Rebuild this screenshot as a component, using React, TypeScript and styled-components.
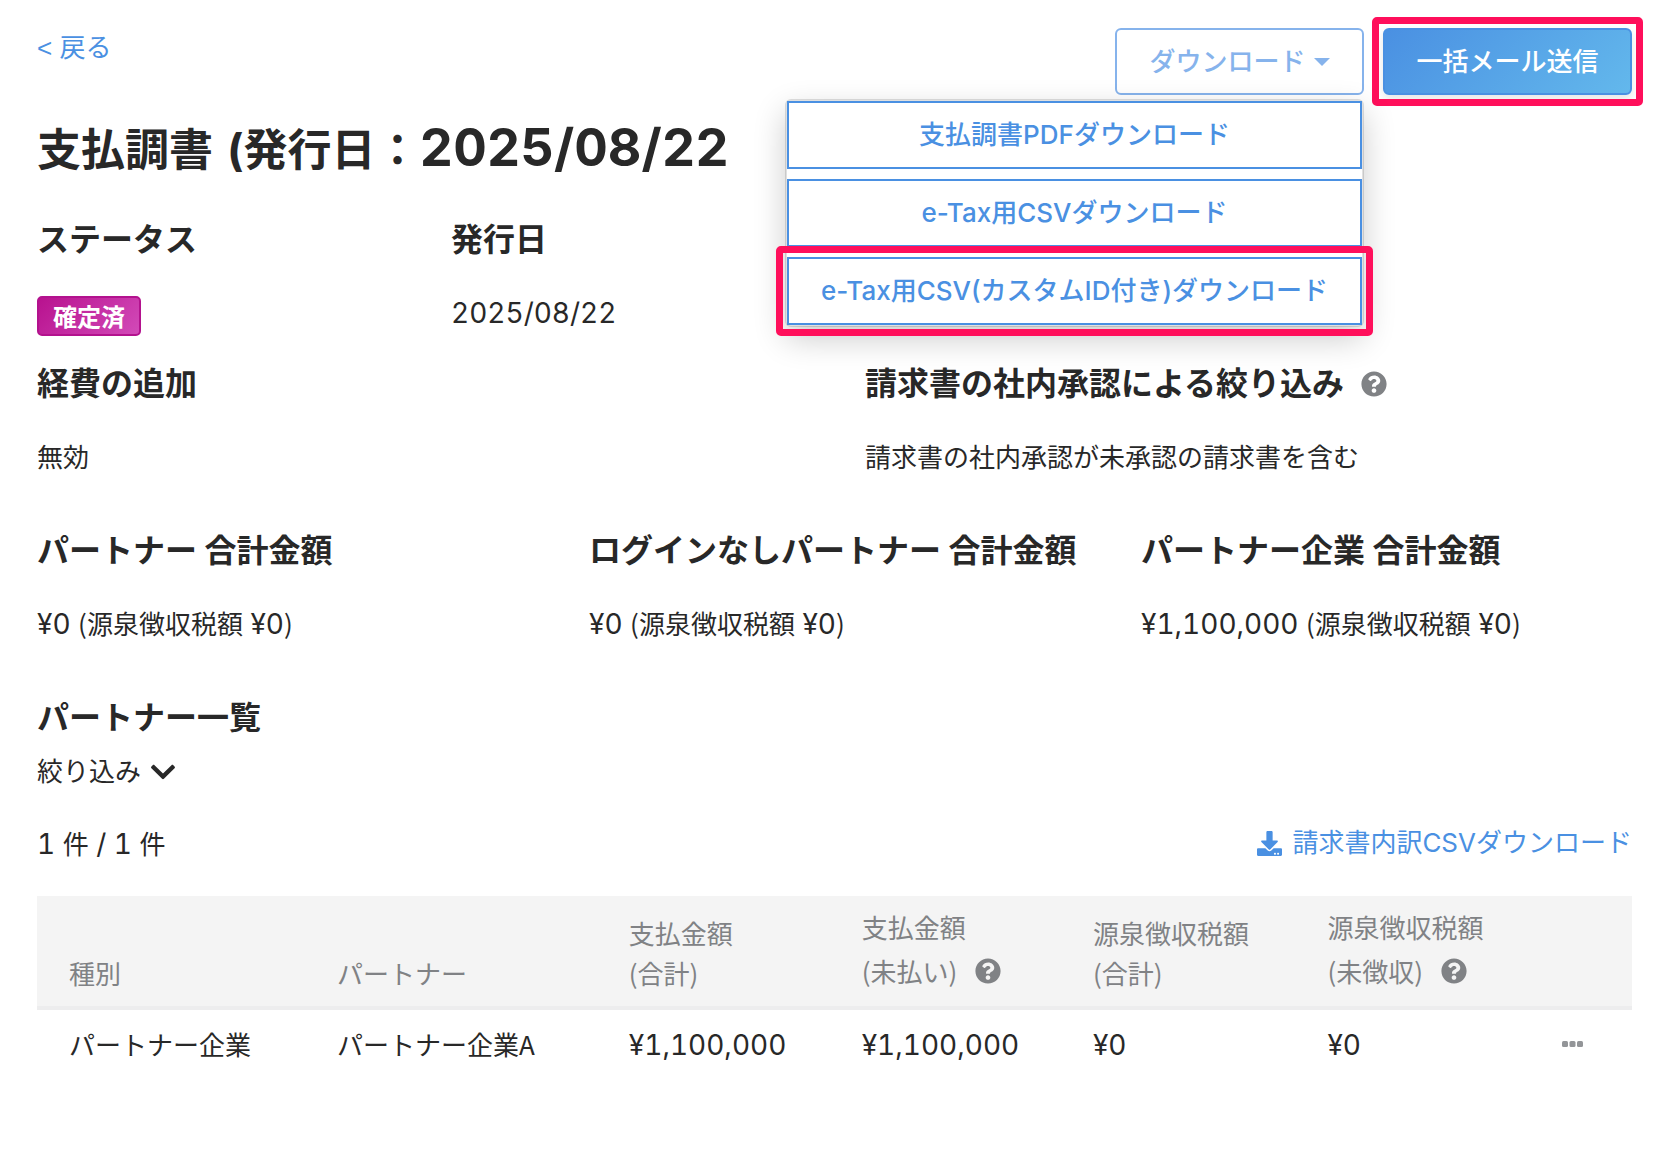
import React from 'react';
import styled, { createGlobalStyle } from 'styled-components';
import { FaChevronDown, FaDownload, FaQuestionCircle } from 'react-icons/fa';

const blue = '#4a90e2';
const ink = '#282828';
const gray = '#808285';
const pink = '#ff0f5b';

const GlobalStyle = createGlobalStyle`
  *, *::before, *::after { box-sizing: border-box; }
  body {
    margin: 0;
    background: #fff;
    color: ${ink};
    font-family: Inter, 'Noto Sans CJK JP', sans-serif;
    font-size: 26px;
    line-height: 40px;
  }
  button { font: inherit; cursor: pointer; }
`;

const Page = styled.main`
  padding: 28px 44px 60px 37px;
`;

const TopBar = styled.header`
  display: flex;
  justify-content: space-between;
  align-items: flex-start;
`;

const BackLink = styled.a`
  color: ${blue};
  font-family: 'Liberation Sans', 'Noto Sans CJK JP', sans-serif;
  text-decoration: none;
`;

const Actions = styled.div`
  display: flex;
  gap: 19px;
`;

const Dropdown = styled.div`
  position: relative;
`;

const Button = styled.button`
  position: relative;
  display: flex;
  align-items: center;
  justify-content: center;
  width: 249px;
  height: 67px;
  padding: 0;
  border: 2px solid ${blue};
  border-radius: 6px;
  font-weight: 500;
`;

const ToggleButton = styled(Button)`
  gap: 8px;
  border-color: #86b3ec;
  background: #fff;
  color: #86b3ec;
`;

const PrimaryButton = styled(Button)`
  background: linear-gradient(135deg, ${blue}, #63b8ec);
  color: #fff;
  box-shadow: 0 4px 8px rgba(0, 0, 0, 0.1);
`;

const Frame = styled.span`
  position: absolute;
  inset: -13px;
  border: 7px solid ${pink};
  border-radius: 5px;
  pointer-events: none;
`;

const Menu = styled.ul`
  position: absolute;
  z-index: 1;
  top: calc(100% + 4px);
  right: 0;
  display: grid;
  gap: 10px;
  width: 579px;
  margin: 0;
  padding: 0;
  list-style: none;
  border: 2px solid rgba(0, 0, 0, 0.12);
  border-radius: 6px;
  background: #fff;
  background-clip: padding-box;
  box-shadow: 0 12px 32px rgba(0, 0, 0, 0.2);
`;

const MenuButton = styled(Button)`
  width: 100%;
  height: 68px;
  border-radius: 0;
  background: #fff;
  color: ${blue};
`;

const Title = styled.h1`
  margin: 21px 0 0;
  font-size: 44px;
  line-height: 68px;
  font-weight: 700;
`;

const Figure = styled.span<{ $large?: boolean }>`
  font-family: Inter, sans-serif;
  font-size: ${(p) => (p.$large ? 52 : 28)}px;
  line-height: 1;
  font-variant-numeric: tabular-nums;
`;

const Grid = styled.dl<{ $columns: number; $top: number }>`
  display: grid;
  grid-template-columns: repeat(${(p) => p.$columns}, minmax(0, 1fr));
  column-gap: 61px;
  row-gap: 24px;
  margin: ${(p) => p.$top}px 0 0;
`;

const Item = styled.div<{ $span?: number }>`
  grid-column: span ${(p) => p.$span ?? 1};
  white-space: nowrap;
`;

const Term = styled.dt`
  display: flex;
  align-items: center;
  gap: 17px;
  height: 48px;
  font-size: 32px;
  font-weight: 700;
`;

const Value = styled.dd`
  height: 48px;
  margin: 24px 0 0;
  font-family: 'Noto Sans CJK JP', sans-serif;
  line-height: 48px;
`;

const Badge = styled.span`
  display: inline-block;
  vertical-align: bottom;
  padding: 0 14px;
  border: 2px solid #b3128e;
  border-radius: 5px;
  background: linear-gradient(135deg, #b8128f, #d24ab8);
  color: #fff;
  font-size: 24px;
  line-height: 36px;
  font-weight: 700;
`;

const HelpIcon = styled(FaQuestionCircle)`
  width: 26px;
  height: 26px;
  color: ${gray};
`;

const ListTitle = styled.h2`
  margin: 47px 0 0;
  font-size: 32px;
  line-height: 48px;
  font-weight: 700;
`;

const FilterButton = styled.button`
  display: flex;
  align-items: center;
  gap: 8px;
  margin: 10px 0 0;
  padding: 0;
  border: 0;
  background: none;
  color: ${ink};
`;

const ListBar = styled.div`
  display: flex;
  justify-content: space-between;
  align-items: center;
  margin: 31px 0 33px;
`;

const Count = styled.span`
  font-family: 'Noto Sans CJK JP', sans-serif;
`;

const DownloadLink = styled.a`
  display: flex;
  align-items: center;
  gap: 10px;
  color: ${blue};
  text-decoration: none;
`;

const Table = styled.table`
  width: 100%;
  table-layout: fixed;
  border-collapse: collapse;
  font-family: 'Noto Sans CJK JP', sans-serif;
  white-space: nowrap;
`;

const HeadCell = styled.th<{ $width: number }>`
  width: ${(p) => p.$width}%;
  padding: 9px 0 13px 32px;
  border-bottom: 4px solid #ededee;
  background: #f4f4f4;
  color: ${gray};
  font-weight: 400;
  text-align: left;
  vertical-align: bottom;
`;

const HeadLine = styled.span<{ $tall?: boolean }>`
  display: flex;
  align-items: center;
  gap: 18px;
  height: ${(p) => (p.$tall ? 44 : 40)}px;
`;

const Cell = styled.td`
  height: 70px;
  padding: 0 0 0 32px;
`;

const MoreButton = styled.button`
  display: flex;
  padding: 0;
  border: 0;
  background: none;
  color: #939598;
`;

const Caret = () => (
  <svg width="16" height="8" viewBox="0 0 16 8" fill="currentColor" aria-hidden="true">
    <path d="M0 0h16L8 8z" />
  </svg>
);

const Dots = () => (
  <svg width="21" height="6" viewBox="0 0 21 6" fill="currentColor" aria-hidden="true">
    <rect width="6" height="6" rx="1.5" />
    <rect x="7.5" width="6" height="6" rx="1.5" />
    <rect x="15" width="6" height="6" rx="1.5" />
  </svg>
);

const columns = [
  { lines: ['種別'], width: 16.8 },
  { lines: ['パートナー'], width: 18.3 },
  { lines: ['支払金額', '(合計)'], width: 14.6 },
  { lines: ['支払金額', '(未払い)'], width: 14.5, help: true },
  { lines: ['源泉徴収税額', '(合計)'], width: 14.7 },
  { lines: ['源泉徴収税額', '(未徴収)'], width: 14.7, help: true },
  { lines: [], width: 6.4 },
];

const totals = [
  { term: 'パートナー 合計金額', amount: '¥0' },
  { term: 'ログインなしパートナー 合計金額', amount: '¥0' },
  { term: 'パートナー企業 合計金額', amount: '¥1,100,000' },
];

export default function App() {
  return (
    <Page>
      <GlobalStyle />
      <TopBar>
        <BackLink href="#">&lt; 戻る</BackLink>
        <Actions>
          <Dropdown>
            <ToggleButton type="button" aria-haspopup="true" aria-expanded="true">
              ダウンロード
              <Caret />
            </ToggleButton>
            <Menu>
              <li><MenuButton type="button">支払調書PDFダウンロード</MenuButton></li>
              <li><MenuButton type="button">e-Tax用CSVダウンロード</MenuButton></li>
              <li>
                <MenuButton type="button">
                  e-Tax用CSV(カスタムID付き)ダウンロード
                  <Frame />
                </MenuButton>
              </li>
            </Menu>
          </Dropdown>
          <PrimaryButton type="button">
            一括メール送信
            <Frame />
          </PrimaryButton>
        </Actions>
      </TopBar>

      <Title>支払調書<Figure $large> </Figure>(発行日：<Figure $large>2025/08/22</Figure></Title>

      <Grid $columns={4} $top={32}>
        <Item>
          <Term>ステータス</Term>
          <Value><Badge>確定済</Badge></Value>
        </Item>
        <Item $span={3}>
          <Term>発行日</Term>
          <Value><Figure>2025/08/22</Figure></Value>
        </Item>
        <Item $span={2}>
          <Term>経費の追加</Term>
          <Value>無効</Value>
        </Item>
        <Item $span={2}>
          <Term>請求書の社内承認による絞り込み <HelpIcon /></Term>
          <Value>請求書の社内承認が未承認の請求書を含む</Value>
        </Item>
      </Grid>

      <Grid $columns={3} $top={47}>
        {totals.map((t) => (
          <Item key={t.term}>
            <Term>{t.term}</Term>
            <Value>
              <Figure>{t.amount} </Figure>(源泉徴収税額<Figure> ¥0</Figure>)
            </Value>
          </Item>
        ))}
      </Grid>

      <ListTitle>パートナー一覧</ListTitle>
      <FilterButton type="button">絞り込み <FaChevronDown size={28} /></FilterButton>
      <ListBar>
        <Count><Figure>1 </Figure>件<Figure> / 1 </Figure>件</Count>
        <DownloadLink href="#"><FaDownload size={25} />請求書内訳CSVダウンロード</DownloadLink>
      </ListBar>

      <Table>
        <thead>
          <tr>
            {columns.map((c, i) => (
              <HeadCell key={i} $width={c.width}>
                {c.lines.map((line, n) => (
                  <HeadLine key={line} $tall={c.help}>
                    {line}
                    {c.help && n === 1 && <HelpIcon />}
                  </HeadLine>
                ))}
              </HeadCell>
            ))}
          </tr>
        </thead>
        <tbody>
          <tr>
            <Cell>パートナー企業</Cell>
            <Cell>パートナー企業A</Cell>
            <Cell><Figure>¥1,100,000</Figure></Cell>
            <Cell><Figure>¥1,100,000</Figure></Cell>
            <Cell><Figure>¥0</Figure></Cell>
            <Cell><Figure>¥0</Figure></Cell>
            <Cell>
              <MoreButton type="button" aria-label="メニュー"><Dots /></MoreButton>
            </Cell>
          </tr>
        </tbody>
      </Table>
    </Page>
  );
}
